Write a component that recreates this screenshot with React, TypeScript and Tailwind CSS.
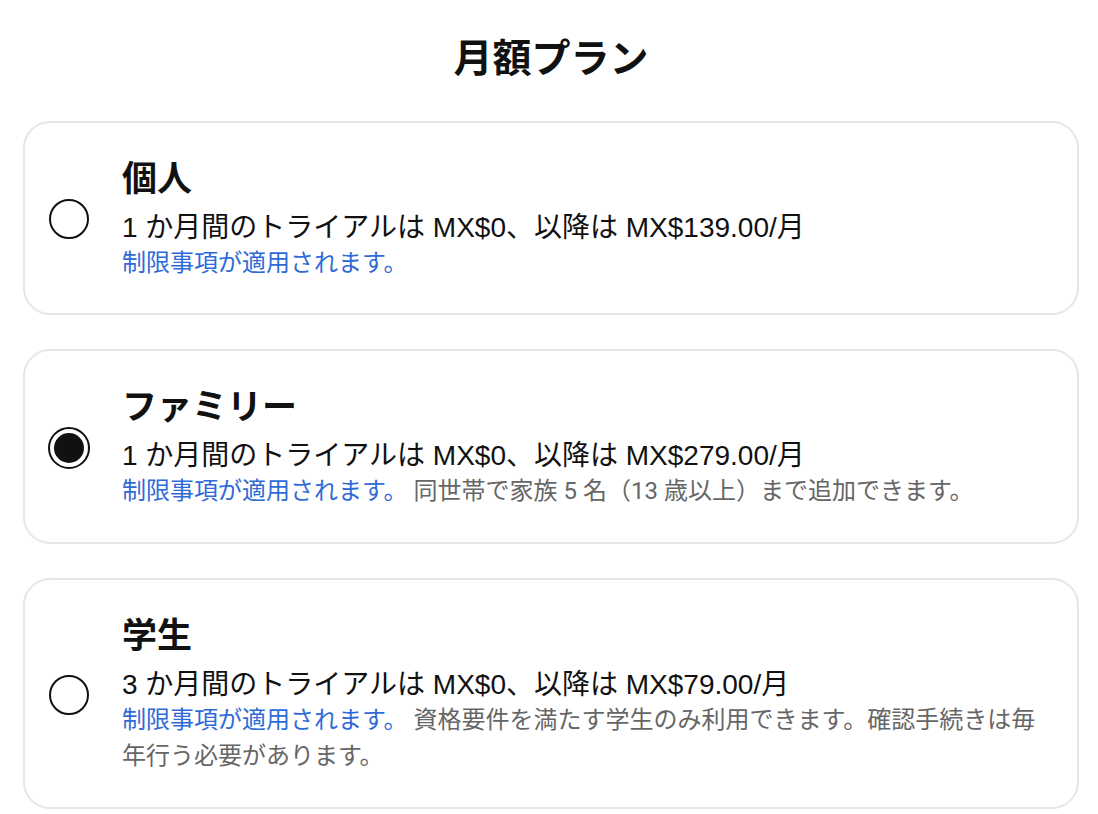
import { useState } from 'react'

type Plan = {
  id: string
  name: string
  price: string
  note?: string
}

const plans: Plan[] = [
  { id: 'individual', name: '個人', price: '1 か月間のトライアルは MX$0、以降は MX$139.00/月' },
  {
    id: 'family',
    name: 'ファミリー',
    price: '1 か月間のトライアルは MX$0、以降は MX$279.00/月',
    note: '同世帯で家族 5 名（13 歳以上）まで追加できます。',
  },
  {
    id: 'student',
    name: '学生',
    price: '3 か月間のトライアルは MX$0、以降は MX$79.00/月',
    note: '資格要件を満たす学生のみ利用できます。確認手続きは毎年行う必要があります。',
  },
]

function Radio({ checked }: { checked: boolean }) {
  if (checked) {
    return (
      <span className="flex h-[42px] w-[42px] shrink-0 items-center justify-center rounded-full border-2 border-[#111]">
        <span className="h-[30px] w-[30px] rounded-full bg-[#111]" />
      </span>
    )
  }
  return <span className="mx-px h-[40px] w-[40px] shrink-0 rounded-full border-2 border-[#111]" />
}

export default function App() {
  const [selected, setSelected] = useState('family')

  return (
    <div
      className="min-h-screen bg-white pl-[23px] pr-[19px] pt-[35px] text-[#111]"
      style={{ fontFamily: "'Liberation Sans', 'Noto Sans CJK JP', sans-serif" }}
    >
      <h1 className="text-center text-[39px] font-bold leading-[48px]">月額プラン</h1>

      <div className="mt-[38px] flex flex-col gap-[34px]">
        {plans.map((plan) => (
          <button
            key={plan.id}
            onClick={() => setSelected(plan.id)}
            className="flex items-center gap-[32px] rounded-[27px] border-2 border-[#e6e6e6] bg-white pb-[33px] pl-[23px] pr-[28px] pt-[35px] text-left"
          >
            <Radio checked={selected === plan.id} />
            <div className="flex-1">
              <div className="text-[35px] font-bold leading-[42px]">{plan.name}</div>
              <div className="mt-[11px] text-[28px] leading-[34px]">{plan.price}</div>
              <div className="text-[24px] leading-[35px]">
                <span className="text-[#2f6bd8]">制限事項が適用されます。</span>
                {plan.note && (
                  <span
                    className="ml-[6px] text-[#666]"
                    style={{ fontFamily: "Roboto, 'Noto Sans CJK JP', sans-serif" }}
                  >
                    {plan.note}
                  </span>
                )}
              </div>
            </div>
          </button>
        ))}
      </div>
    </div>
  )
}
